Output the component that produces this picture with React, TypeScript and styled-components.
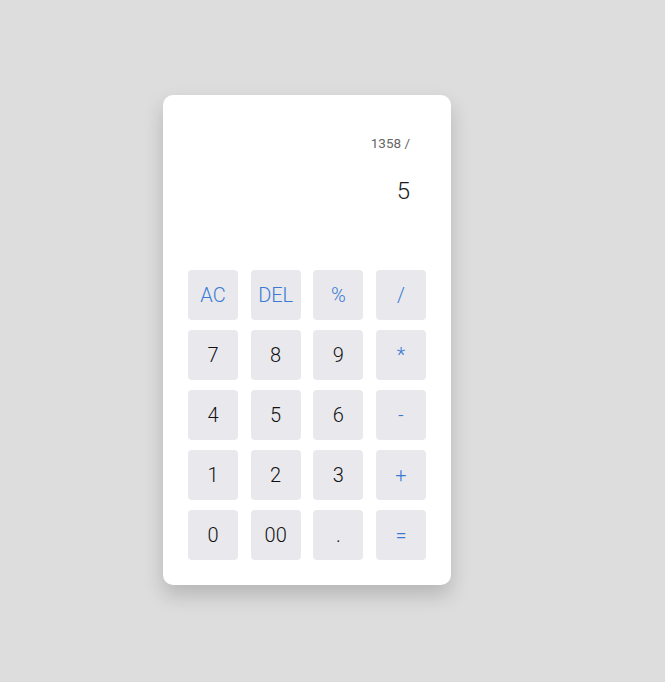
import React from "react";
import styled, { createGlobalStyle } from "styled-components";

const Global = createGlobalStyle`
  html, body { margin: 0; padding: 0; background: #dddddd; }
  body { font-family: Roboto, "Noto Sans", sans-serif; }
`;

const Page = styled.div`
  padding: 95px 0 0 163px;
  min-height: 682px;
  box-sizing: border-box;
`;

const Card = styled.div`
  width: 288px;
  box-sizing: border-box;
  padding: 25px;
  background: #ffffff;
  border-radius: 10px;
  box-shadow: 0 10px 20px rgba(0, 0, 0, 0.18);
`;

const Display = styled.div`
  height: 150px;
  box-sizing: border-box;
  padding: 15px 16px 0 0;
  display: flex;
  flex-direction: column;
  align-items: flex-end;
`;

const Previous = styled.div`
  font-size: 13.5px;
  line-height: 16px;
  font-weight: 400;
  color: #666666;
`;

const Current = styled.div`
  margin-top: 26px;
  font-size: 24px;
  line-height: 28px;
  font-weight: 300;
  color: #1a1a1a;
`;

const Keys = styled.div`
  display: grid;
  grid-template-columns: repeat(4, 50px);
  justify-content: space-between;
  row-gap: 10px;
`;

const Key = styled.button<{ $op?: boolean }>`
  width: 50px;
  height: 50px;
  border: none;
  border-radius: 4px;
  background: #e9e9ed;
  padding: 0;
  font-family: Roboto, "Noto Sans", sans-serif;
  font-size: 20px;
  font-weight: 300;
  color: ${(p) => (p.$op ? "#3a7ad4" : "#111111")};
  display: flex;
  align-items: center;
  justify-content: center;
  cursor: pointer;
`;

const keys: [string, boolean][] = [
  ["AC", true], ["DEL", true], ["%", true], ["/", true],
  ["7", false], ["8", false], ["9", false], ["*", true],
  ["4", false], ["5", false], ["6", false], ["-", true],
  ["1", false], ["2", false], ["3", false], ["+", true],
  ["0", false], ["00", false], [".", false], ["=", true],
];

export default function App() {
  return (
    <>
      <Global />
      <Page>
        <Card>
          <Display>
            <Previous>1358 /</Previous>
            <Current>5</Current>
          </Display>
          <Keys>
            {keys.map(([k, op]) => (
              <Key key={k} $op={op}>{k}</Key>
            ))}
          </Keys>
        </Card>
      </Page>
    </>
  );
}
